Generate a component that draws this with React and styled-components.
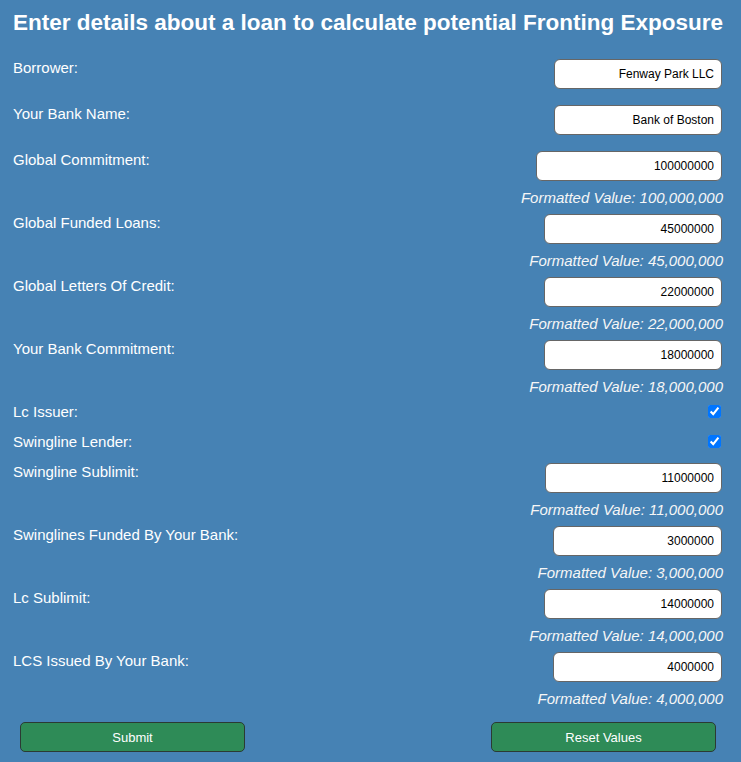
import React from "react";
import styled, { createGlobalStyle } from "styled-components";

const GlobalStyle = createGlobalStyle`
  html, body {
    margin: 0;
    padding: 0;
    background: #4682b4;
  }
  body {
    font-family: "Liberation Sans", Arial, sans-serif;
  }
`;

const Page = styled.div`
  padding: 10px 19px 0 13px;
  color: #fff;
`;

const Title = styled.h1`
  margin: 0 0 24px 0;
  font-size: 22.5px;
  line-height: 25px;
  font-weight: 700;
  text-align: center;
  white-space: nowrap;
`;

const Row = styled.div`
  display: flex;
  justify-content: space-between;
  align-items: flex-start;
  margin-bottom: ${(p) => p.$gap}px;
`;

const Label = styled.label`
  font-size: 15px;
  line-height: 17px;
`;

const Field = styled.div`
  display: flex;
  flex-direction: column;
  align-items: flex-end;
`;

const Input = styled.input`
  box-sizing: border-box;
  width: ${(p) => p.$width}px;
  height: 30px;
  margin: 0;
  padding: 0 7px 0 6px;
  border: 1px solid #666;
  border-radius: 6px;
  background: #fff;
  color: #000;
  text-align: right;
  font-family: "Liberation Sans", Arial, sans-serif;
  font-size: 12px;
  outline: none;
`;

const Formatted = styled.div`
  margin-top: 8px;
  margin-right: -1px;
  font-size: 15px;
  line-height: 17px;
  font-style: italic;
  color: #f6f6f6;
`;

const Check = styled.input`
  width: 13px;
  height: 13px;
  margin: 2px 1px 0 0;
  accent-color: #0075ff;
`;

const Buttons = styled.div`
  display: flex;
  justify-content: space-between;
  padding: 0 6px 0 7px;
  margin-top: 15px;
`;

const Button = styled.button`
  box-sizing: border-box;
  width: 225px;
  height: 30px;
  border: 1px solid #2b3a33;
  border-radius: 5px;
  background: #2e8b57;
  color: #fff;
  font-family: "Liberation Sans", Arial, sans-serif;
  font-size: 13px;
  cursor: pointer;
`;

const fields = [
  { label: "Borrower:", value: "Fenway Park LLC", width: 168 },
  { label: "Your Bank Name:", value: "Bank of Boston", width: 168 },
  { label: "Global Commitment:", value: "100000000", width: 186, num: true },
  { label: "Global Funded Loans:", value: "45000000", width: 178, num: true },
  { label: "Global Letters Of Credit:", value: "22000000", width: 178, num: true },
  { label: "Your Bank Commitment:", value: "18000000", width: 178, num: true },
  { label: "Lc Issuer:", check: true, gap: 13 },
  { label: "Swingline Lender:", check: true, gap: 13 },
  { label: "Swingline Sublimit:", value: "11000000", width: 177, num: true },
  { label: "Swinglines Funded By Your Bank:", value: "3000000", width: 169, num: true },
  { label: "Lc Sublimit:", value: "14000000", width: 178, num: true },
  { label: "LCS Issued By Your Bank:", value: "4000000", width: 169, num: true },
];

const fmt = (v) => Number(v).toLocaleString("en-US");

const App = () => {
  return (
    <Page>
      <GlobalStyle />
      <Title>Enter details about a loan to calculate potential Fronting Exposure</Title>
      {fields.map((f, i) => {
        const last = i === fields.length - 1;
        if (f.check) {
          return (
            <Row key={f.label} $gap={f.gap}>
              <Label>{f.label}</Label>
              <Check type="checkbox" defaultChecked />
            </Row>
          );
        }
        return (
          <Row key={f.label} $gap={last ? 0 : f.num ? 8 : 16}>
            <Label>{f.label}</Label>
            <Field>
              <Input $width={f.width} defaultValue={f.value} />
              {f.num && <Formatted>Formatted Value: {fmt(f.value)}</Formatted>}
            </Field>
          </Row>
        );
      })}
      <Buttons>
        <Button>Submit</Button>
        <Button>Reset Values</Button>
      </Buttons>
    </Page>
  );
};

export default App;
